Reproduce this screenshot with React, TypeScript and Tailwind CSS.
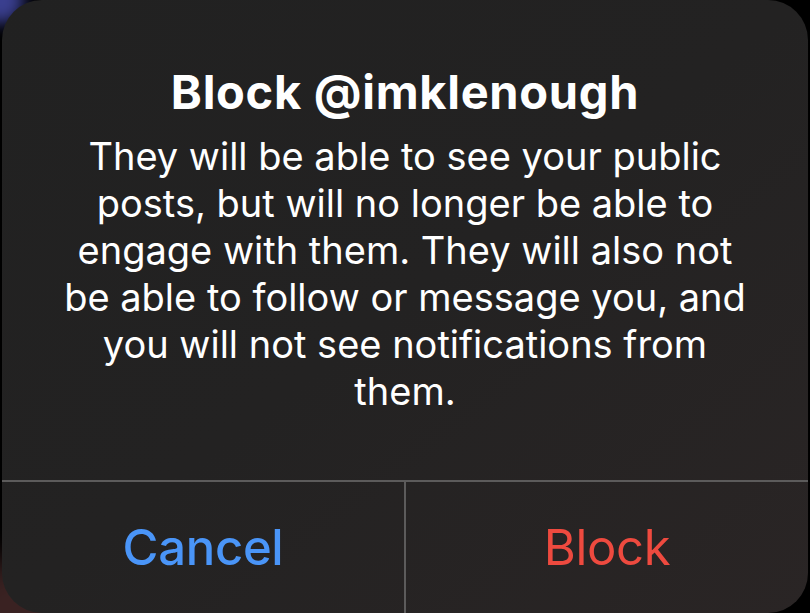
export default function App() {
  const lines = [
    "They will be able to see your public",
    "posts, but will no longer be able to",
    "engage with them. They will also not",
    "be able to follow or message you, and",
    "you will not see notifications from",
    "them.",
  ];

  return (
    <div className="relative h-[613px] w-[810px] overflow-hidden bg-black font-['Inter',sans-serif]">
      <div className="absolute -left-6 -top-6 h-12 w-12 rounded-full bg-[#3a3f8f] blur-sm" />
      <div className="absolute -bottom-14 -left-10 h-28 w-36 rounded-full bg-[#3a2222] blur-lg" />

      <div className="relative ml-[2px] flex h-[613px] w-[806px] flex-col rounded-[40px] bg-gradient-to-br from-[#212121] via-[#232222] to-[#2a2525] text-center">
        <div className="flex h-[480px] flex-col items-center pt-[66px]">
          <h1 className="text-[47px] font-bold leading-[52px] tracking-[0.7px] text-white">
            Block @imklenough
          </h1>
          <div className="mt-[15px] text-[38px] leading-[47px] text-white">
            {lines.map((line, i) => (
              <p key={i}>{line}</p>
            ))}
          </div>
        </div>

        <div className="flex flex-1 border-t-2 border-[#5c5b5b]">
          <button className="flex-1 text-[49px] font-medium tracking-[-0.3px] text-[#4a95f8]">
            Cancel
          </button>
          <div className="w-[2px] bg-[#5c5b5b]" />
          <button className="flex-1 text-[49px] tracking-[-0.3px] text-[#ee4a3f]">
            Block
          </button>
        </div>
      </div>
    </div>
  );
}
